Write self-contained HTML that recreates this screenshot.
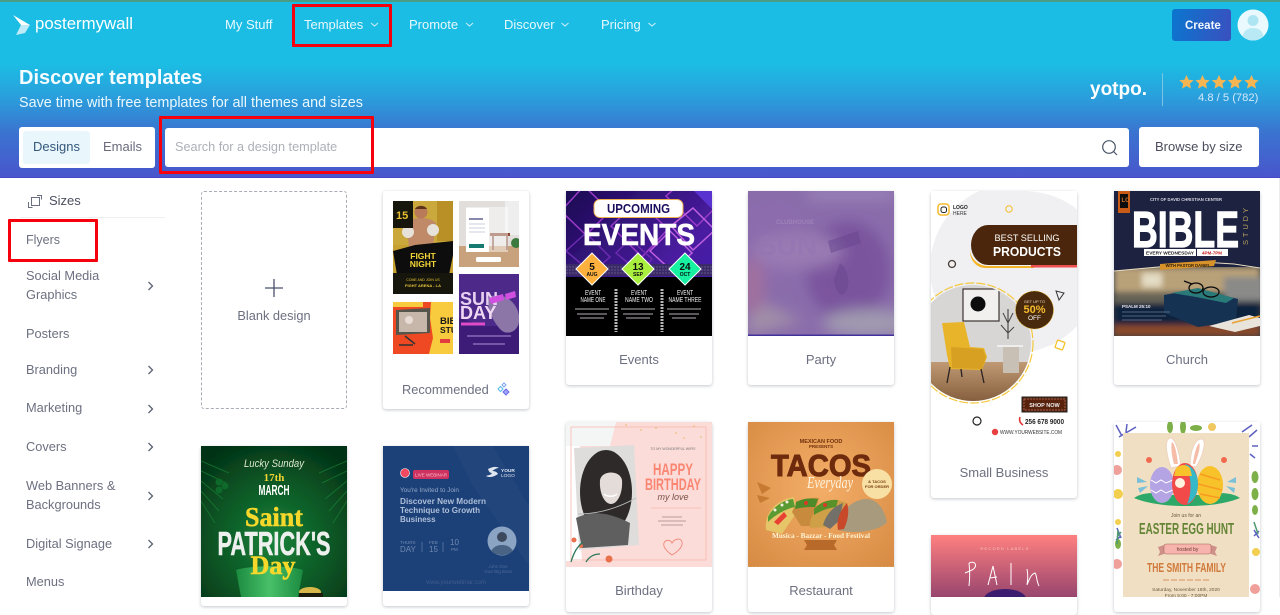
<!DOCTYPE html>
<html lang="en"><head><meta charset="utf-8"><title>Discover templates</title>
<style>
*{box-sizing:border-box;margin:0;padding:0}
html,body{width:1280px;height:597px;overflow:hidden;background:#fff;font-family:"Liberation Sans",sans-serif}
.t{position:absolute;white-space:nowrap;line-height:20px;height:20px;filter:blur(.25px)}
.hd{position:absolute;left:0;top:0;width:1280px;height:178px;background:linear-gradient(180deg,#1bbde4 0,#1bbde4 62px,#2a9fdc 95px,#3a74d0 130px,#4a55cc 177px);border-top:2px solid #4a9c84;border-bottom:1px solid #4548c8}
.nav{color:#e8f8fd;font-size:13px}
.side{color:#6c7080;font-size:12.800px;left:26px}
.lab{color:#6c7080;font-size:13px;text-align:center;width:146px}
.box{position:absolute;background:#fff;border-radius:3px}
.card{position:absolute;width:146px;background:#fff;border-radius:3px;box-shadow:0 1px 3px rgba(40,50,70,.28)}
.red{position:absolute;border:3px solid #f5000c;border-radius:1px}
svg{position:absolute;left:0;top:0}
</style></head><body>

<header class="hd"></header>
<svg width="30" height="40" style="left:8px;top:8px"><path d="M5 7 L22 17 L13 17Z" fill="#fff"/><path d="M22 17 L17 25 L8 27 L13 17Z" fill="#bfeaf7"/></svg>
<div class="t" style="left:35px;top:14px;font-size:16.800px;color:#fff">postermywall</div>

<nav>
<div class="t nav" style="left:225px;top:15px">My Stuff</div>
<div class="t nav" style="left:304px;top:15px">Templates</div>
<div class="t nav" style="left:409px;top:15px">Promote</div>
<div class="t nav" style="left:504px;top:15px">Discover</div>
<div class="t nav" style="left:601px;top:15px">Pricing</div>
</nav>
<svg width="680" height="40"><g fill="none" stroke="#c8ecf7" stroke-width="1.100"><path d="M371 23l3.500 3 3.500-3M466 23l3.500 3 3.500-3M561.500 23l3.500 3 3.500-3M648.500 23l3.500 3 3.500-3"/></g></svg>

<div style="position:absolute;left:1172px;top:9px;width:59px;height:32px;border-radius:3px;background:linear-gradient(100deg,#0a76cf,#3a50bf)"></div>
<div class="t" style="left:1185px;top:16px;font-size:11.500px;font-weight:bold;color:#f2f8ff">Create</div>
<svg width="1280" height="60"><circle cx="1253" cy="25" r="15.500" fill="#e9f9fd"/><circle cx="1253" cy="20.500" r="5.500" fill="#aee5f3"/><path d="M1242.500 36c1-5 5-8 10.500-8s9.500 3 10.500 8c-3 3-6.500 4.500-10.500 4.500s-7.500-1.500-10.500-4.500z" fill="#b8e9f5"/></svg>

<h1 class="t" style="left:19px;top:68px;font-size:20px;font-weight:bold;color:#f4fcff">Discover templates</h1>
<div class="t" style="left:19px;top:93px;font-size:14.400px;color:#eaf8fd">Save time with free templates for all themes and sizes</div>

<div class="t" style="left:1090px;top:80px;font-size:19px;font-weight:bold;color:#fff">yotpo.</div>
<div style="position:absolute;left:1162px;top:73px;width:1px;height:33px;background:#7dc3e6"></div>
<svg width="1280" height="110"><g fill="#f5b553"><path id="s" d="M1186.500 75l2.100 4.700 5.100.5-3.800 3.400 1.100 5-4.500-2.600-4.500 2.600 1.100-5-3.800-3.400 5.100-.5z"/><use href="#s" x="16"/><use href="#s" x="32.500"/><use href="#s" x="48.500"/><use href="#s" x="65"/></g></svg>
<div class="t" style="left:1198px;top:88px;font-size:11.200px;color:#d4e8f8">4.8 / 5 (782)</div>

<div class="box" style="left:19px;top:127px;width:136px;height:41px"></div>
<div style="position:absolute;left:23px;top:131px;width:67px;height:33px;border-radius:3px;background:#e9f6fc"></div>
<div class="t" style="left:33px;top:137px;font-size:13px;color:#33587a">Designs</div>
<div class="t" style="left:103px;top:137px;font-size:13px;color:#6a6a7c">Emails</div>
<div class="box" style="left:165px;top:128px;width:964px;height:39px"></div>
<div class="t" style="left:175px;top:137px;font-size:12.700px;color:#adb0b8">Search for a design template</div>
<svg width="1280" height="170"><circle cx="1109" cy="147" r="6.300" fill="none" stroke="#4a5568" stroke-width="1.200"/><path d="M1113.500 151.500l3.500 3.500" stroke="#4a5568" stroke-width="1.200"/></svg>
<div class="box" style="left:1139px;top:127px;width:120px;height:40px"></div>
<div class="t" style="left:1155px;top:137px;font-size:13px;color:#4c4c5c">Browse by size</div>

<aside>
<svg width="190" height="597"><g fill="none" stroke="#6a7080" stroke-width="1"><rect x="31.500" y="197.500" width="8" height="8"/><path d="M28.500 202v5.500h4M37 195.500h4.500v4"/></g>
<path d="M20 217.500h145" stroke="#eeeeee"/>
<g fill="none" stroke="#5c6272" stroke-width="1.300"><path d="M148.500 282l4 4-4 4M148.500 366l4 4-4 4M148.500 405l4 4-4 4M148.500 443l4 4-4 4M148.500 492l4 4-4 4M148.500 540l4 4-4 4"/></g></svg>
<div class="t" style="left:49px;top:191px;font-size:13px;color:#4c5060">Sizes</div>
<div class="t side" style="top:230px;font-size:12.500px">Flyers</div>
<div class="t side" style="top:266px">Social Media</div>
<div class="t side" style="top:285px">Graphics</div>
<div class="t side" style="top:324px">Posters</div>
<div class="t side" style="top:360px">Branding</div>
<div class="t side" style="top:398px">Marketing</div>
<div class="t side" style="top:437px">Covers</div>
<div class="t side" style="top:476px">Web Banners &amp;</div>
<div class="t side" style="top:495px">Backgrounds</div>
<div class="t side" style="top:534px">Digital Signage</div>
<div class="t side" style="top:572px">Menus</div>
</aside>

<div style="position:absolute;left:201px;top:191px;width:146px;height:218px;border:1px dashed #a8acb4;border-radius:3px"></div>
<svg width="1280" height="597"><path d="M274 279v18M265 288h18" stroke="#47506a" stroke-width="1.300"/></svg>
<div class="t lab" style="left:201px;top:306px;font-size:12.800px">Blank design</div>

<div class="card" style="left:383px;top:191px;height:218px"></div>
<div class="card" style="left:566px;top:191px;height:194px"></div>
<div class="card" style="left:748px;top:191px;height:194px"></div>
<div class="card" style="left:931px;top:191px;height:307px"></div>
<div class="card" style="left:1114px;top:191px;height:194px"></div>
<div class="card" style="left:201px;top:446px;height:160px"></div>
<div class="card" style="left:383px;top:446px;height:160px"></div>
<div class="card" style="left:566px;top:422px;height:190px"></div>
<div class="card" style="left:748px;top:422px;height:190px"></div>
<div class="card" style="left:931px;top:535px;height:80px"></div>
<div class="card" style="left:1114px;top:422px;height:190px"></div>

<svg width="1280" height="597" font-family="Liberation Sans, sans-serif">
<defs>
<filter id="b"><feGaussianBlur stdDeviation=".35"/></filter>
<filter id="b6"><feGaussianBlur stdDeviation="7"/></filter>
<filter id="b3"><feGaussianBlur stdDeviation="3"/></filter>
<linearGradient id="ev" x1="0" y1="0" x2="1" y2="1"><stop offset="0" stop-color="#1b0a52"/><stop offset=".6" stop-color="#4a1ca0"/><stop offset="1" stop-color="#3a20b0"/></linearGradient>
<radialGradient id="tc" cx=".5" cy=".45" r=".75"><stop offset="0" stop-color="#f4ae68"/><stop offset="1" stop-color="#d68a42"/></radialGradient>
<linearGradient id="pn" x1="0" y1="0" x2="0" y2="1"><stop offset="0" stop-color="#ff8080"/><stop offset="1" stop-color="#98456e"/></linearGradient>
<radialGradient id="sp" cx=".5" cy=".62" r=".7"><stop offset="0" stop-color="#1a8238"/><stop offset=".6" stop-color="#0a5424"/><stop offset="1" stop-color="#043216"/></radialGradient>
<linearGradient id="pt" x1="0" y1="0" x2="1" y2="0"><stop offset="0" stop-color="#1c8a40"/><stop offset=".5" stop-color="#48c068"/><stop offset="1" stop-color="#1c8a40"/></linearGradient>
<linearGradient id="flr" x1="0" y1="0" x2="0" y2="1"><stop offset="0" stop-color="#c09a74"/><stop offset="1" stop-color="#86603e"/></linearGradient>
<clipPath id="pc"><circle cx="42" cy="58" r="58"/></clipPath>
</defs>

<g filter="url(#b)">
<!-- recommended mini thumbs -->
<svg x="393" y="201" width="60" height="93"><rect width="60" height="93" fill="#c7a030"/><rect width="60" height="44" fill="#caa83a"/><path d="M44 0h16v40H44z" fill="#b89028"/>
<path d="M13 22c4-4 10-5 15-5s11 1 15 5l-3 24H16z" fill="#c08a68"/><circle cx="28" cy="11" r="6.500" fill="#b87a58"/><path d="M22 8c2-4 10-4 12 0z" fill="#5a3018"/>
<circle cx="15" cy="31" r="6" fill="#e6e2da"/><circle cx="40" cy="29" r="6" fill="#e6e2da"/>
<rect x="0" y="0" width="20" height="27" fill="#171408"/><text x="3" y="18" font-size="11" font-weight="bold" fill="#e8c030">15</text>
<path d="M0 50l22-6 38-4v14l-4 20H4z" fill="#111008"/><rect y="72" width="60" height="21" fill="#14120a"/>
<text x="30" y="58" text-anchor="middle" font-size="8.500" font-weight="bold" fill="#f2d438">FIGHT</text><text x="30" y="66" text-anchor="middle" font-size="8.500" font-weight="bold" fill="#f2d438">NIGHT</text><text x="30" y="80" text-anchor="middle" font-size="3.500" fill="#e8c838">COME AND JOIN US</text><text x="30" y="86" text-anchor="middle" font-size="4" font-weight="bold" fill="#e8c838">FIGHT ARENA - LA</text></svg>
<svg x="459" y="201" width="60" height="66"><rect width="60" height="66" fill="#e2dedc"/><rect x="46" y="0" width="14" height="34" fill="#eeeeee"/><rect y="45" width="60" height="21" fill="#c8a27c"/><rect x="31" y="32" width="20" height="3" fill="#8a4a30"/><path d="M34 35v14M48 35v14" stroke="#7a3a24" stroke-width="1.500"/><circle cx="57" cy="42" r="5" fill="#3c7a40"/><rect x="7" y="6" width="42" height="45" fill="#fff" opacity=".45"/><rect x="7" y="7" width="23" height="44" fill="#fff"/><rect x="10" y="17" width="14" height="2" fill="#88a"/><path d="M10 23h16M10 27h16M10 31h16" stroke="#ccd"/><rect x="10" y="43" width="15" height="4" fill="#167a70"/><rect x="17" y="56" width="25" height="5" rx="1.500" fill="#fff"/></svg>
<svg x="393" y="302" width="60" height="52"><rect width="60" height="52" fill="#ee4a22"/><path d="M38 0h22v52H36l4-16-3-20z" fill="#f7cb3c"/><rect width="30" height="5" fill="#f7cb3c"/><path d="M3 8l34-2 0 25-34 2z" fill="#56554c"/><rect x="6" y="10" width="28" height="20" fill="#c7b7aa"/><circle cx="16" cy="18" r="4" fill="#e8dcd4"/><path d="M12 34l10 8M6 43h14" stroke="#333" stroke-width="1.500"/><text x="47" y="22" font-size="9.500" font-weight="bold" fill="#151515">BIB</text><text x="47" y="31" font-size="8.500" font-weight="bold" fill="#151515">STU</text><rect x="47" y="37" width="10" height="4" fill="#e23a40"/></svg>
<svg x="459" y="274" width="60" height="80"><rect width="60" height="80" fill="#3c1c78"/><path d="M0 0h60v52H25L0 44z" fill="#4d2c8a"/><path d="M30 24c10-8 28 2 30 18s-12 20-18 14-16-22-12-32z" fill="#8c76a8"/><text x="1" y="31" font-size="18" font-weight="bold" fill="#e8d0f0">SUN</text><text x="1" y="45" font-size="18" font-weight="bold" fill="#f0d8f4">DAY</text><path d="M30 24l14-4 1 6-13 4zM46 20l10-3 1 6-10 3z" fill="#d050e0"/><path d="M2 50h24" stroke="#e04cc8" stroke-width="3"/><path d="M8 62h44M14 70h32" stroke="#b090d8"/></svg>
<!-- sparkle -->
<g transform="translate(503 390)" fill="none" stroke-width="1"><path d="M-5-1l2.500-2.500L0-1l-2.500 2.500z" stroke="#53b7e6"/><path d="M-1-5l2-2 2 2-2 2z" stroke="#7aa5f0"/><path d="M0 2l3-3 3 3-3 3z" stroke="#6a6cf0" fill="#a0a4f5"/></g>

<!-- events -->
<svg x="566" y="191" width="146" height="145"><rect width="146" height="145" fill="url(#ev)"/>
<g fill="none" stroke-width="1.500"><path d="M-5 20L18 -5 44 20 20 44zM45 35L72 10l30 28-26 28zM100 5l25-22 30 28-24 24z" stroke="#9a3ac8"/><path d="M105 35l22-18 22 22-22 20zM84 60l20-20 22 22-20 18z" stroke="#c060e0"/><path d="M0 60l20-18 24 24-18 16zM50 62l14-14 22 20-12 14z" stroke="#6c2cb0"/><path d="M128 0h18v18z" stroke="none" fill="#5a30d0"/></g>
<rect y="73" width="146" height="12" fill="#3a2a68"/><path d="M0 76h146M0 79h146M0 82h146" stroke="#8a80a0" stroke-width=".6" stroke-dasharray="2 1"/>
<rect y="86" width="146" height="59" fill="#030204"/>
<rect x="28" y="8.500" width="89" height="18" rx="6" fill="#fff" stroke="#eeb050"/>
<text x="72.500" y="22" text-anchor="middle" font-size="12.500" font-weight="bold" fill="#1c0f5e" textLength="63" lengthAdjust="spacingAndGlyphs">UPCOMING</text>
<text x="73" y="54" text-anchor="middle" font-size="31" font-weight="bold" fill="#fff" stroke="#fff" stroke-width=".6" textLength="112" lengthAdjust="spacingAndGlyphs">EVENTS</text>
<g stroke="#fff" stroke-width="1"><path d="M26 62l16 16-16 16-16-16z" fill="#ffb03c"/><path d="M72 62l16 16-16 16-16-16z" fill="#a8f03c"/><path d="M119 62l16 16-16 16-16-16z" fill="#12f0a0"/></g>
<g text-anchor="middle" font-weight="bold" fill="#111"><text x="26" y="79" font-size="10">5</text><text x="26" y="85" font-size="5">AUG</text><text x="72" y="79" font-size="10">13</text><text x="72" y="85" font-size="5">SEP</text><text x="119" y="79" font-size="10">24</text><text x="119" y="85" font-size="5">OCT</text></g>
<g text-anchor="middle" font-size="7" fill="#eee"><text x="27" y="104" textLength="16" lengthAdjust="spacingAndGlyphs">EVENT</text><text x="27" y="111" textLength="25" lengthAdjust="spacingAndGlyphs">NAME ONE</text><text x="73" y="104" textLength="16" lengthAdjust="spacingAndGlyphs">EVENT</text><text x="73" y="111" textLength="28" lengthAdjust="spacingAndGlyphs">NAME TWO</text><text x="119" y="104" textLength="16" lengthAdjust="spacingAndGlyphs">EVENT</text><text x="119" y="111" textLength="33" lengthAdjust="spacingAndGlyphs">NAME THREE</text></g>
<path d="M9 118h34M11 123h30M14 127h24M55 118h34M57 123h30M60 127h24M101 118h34M103 123h30M106 127h24" stroke="#8d8d8d" stroke-width="1.300"/>
<path d="M50 98v43M96 98v43" stroke="#b8b8b8" stroke-width="3" stroke-dasharray="2 1"/></svg>

<!-- party -->
<svg x="748" y="191" width="146" height="145"><rect width="146" height="145" fill="#8a6cab"/>
<g filter="url(#b6)"><ellipse cx="100" cy="80" rx="42" ry="50" fill="#7a559e"/><ellipse cx="25" cy="50" rx="30" ry="38" fill="#8d6cad"/><rect x="60" y="0" width="86" height="6" fill="#a898c0"/><path d="M0 105l55 25-55 15z" fill="#a08ea8"/><ellipse cx="120" cy="132" rx="45" ry="14" fill="#a09ab0"/><ellipse cx="50" cy="60" rx="45" ry="18" fill="#9a7ab2"/><ellipse cx="5" cy="95" rx="12" ry="28" fill="#a0709f"/></g>
<text x="28" y="33" font-size="6" font-weight="bold" fill="#9d82b8">CLUBHOUSE</text>
<text x="10" y="64" font-size="28" font-weight="bold" fill="#9676b2" opacity=".7">SUN</text>
<path d="M80 50l30-10 3 12-30 10zM92 72c6 4 12 18 6 28s-12-4-12-12z" fill="#6a4790" opacity=".55"/>
<rect y="143.500" width="146" height="1.500" fill="#41309a"/></svg>

<!-- small business -->
<svg x="931" y="191" width="146" height="273"><rect width="146" height="273" fill="#fff"/>
<circle cx="84" cy="77" r="85" fill="#f0eff2"/>
<path d="M146 0H95a90 90 0 0 1 51 18z" fill="#fff"/>
<rect x="7" y="13" width="11" height="11" rx="3" fill="none" stroke="#f5b92c" stroke-width="1.500"/><rect x="10" y="16" width="5.500" height="5.500" rx="2" fill="none" stroke="#222" stroke-width="1"/>
<text x="22" y="18" font-size="5" font-weight="bold" fill="#222">LOGO</text><text x="22" y="24" font-size="5" fill="#333">HERE</text>
<circle cx="78" cy="18" r="3.200" fill="none" stroke="#f5c02c" stroke-width="1"/><circle cx="21" cy="73" r="3.500" fill="none" stroke="#4a3a30" stroke-width="1.300"/>
<path d="M146 34H57a17 20 0 0 0 0 40h89z" fill="#4b2807"/><path d="M39 60c2 10 10 15 18 15h46v2H55c-10 0-16-8-16-17z" fill="#f4b428"/><rect x="100" y="74" width="46" height="2.500" fill="#f05050"/>
<text x="96" y="50" text-anchor="middle" font-size="9" fill="#fff" textLength="65" lengthAdjust="spacingAndGlyphs">BEST SELLING</text>
<text x="96" y="65" text-anchor="middle" font-size="13" font-weight="bold" fill="#fff" textLength="68" lengthAdjust="spacingAndGlyphs">PRODUCTS</text>
<circle cx="42" cy="152" r="60" fill="none" stroke="#f4c83c" stroke-width="1.200" stroke-dasharray="9 2"/>
<svg x="0" y="94" width="102" height="116"><g clip-path="url(#pc)"><rect width="102" height="116" fill="#d8d6d4"/><rect x="0" y="77" width="102" height="39" fill="url(#flr)"/><rect x="32" y="4" width="36" height="32" fill="#f2f0ee" stroke="#3a3230" stroke-width="1.200"/><circle cx="47" cy="19" r="7.500" fill="#111"/>
<path d="M11 38l22-1 6 25 14 1 3 9-5 13-32-1-3-14z" fill="#e8b42c"/><path d="M20 62l32 2 3 8-4 12-30-1z" fill="#d8a020"/><path d="M19 82l-3 16M50 84l3 14M30 84l1 8" stroke="#2a2020" stroke-width="1.300"/>
<path d="M77 24v30" stroke="#333"/><path d="M72 28l5 10 5-10M70 40l7 8 6-6" stroke="#444" fill="none"/><rect x="66" y="60" width="26" height="2" fill="#eee"/><rect x="72" y="62" width="16" height="26" fill="#c8bfb5"/></g></svg>
<circle cx="103.500" cy="119" r="19" fill="#4a2a08" stroke="#e6b830" stroke-width=".6" stroke-dasharray="2 1"/><text x="103.500" y="112" text-anchor="middle" font-size="4" fill="#e8d8c0">GET UP TO</text><text x="103.500" y="122" text-anchor="middle" font-size="11" font-weight="bold" fill="#f5bc30">50%</text><text x="103.500" y="129" text-anchor="middle" font-size="6.500" fill="#fff">OFF</text>
<path d="M125 100l8 2-5 7z" fill="none" stroke="#333" stroke-width="1"/>
<rect x="-4" y="-4" width="8" height="8" rx="1" transform="translate(129 154) rotate(20)" fill="none" stroke="#f5c22c" stroke-width="1.300"/>
<rect x="91" y="206" width="45" height="15" fill="#58200c" stroke="#222"/><rect x="93" y="208" width="41" height="11" fill="none" stroke="#e0a090" stroke-width=".5" stroke-dasharray="2 1"/><text x="113.500" y="216" text-anchor="middle" font-size="5.500" font-weight="bold" fill="#eee">SHOP NOW</text>
<circle cx="46" cy="230" r="4" fill="none" stroke="#222" stroke-width="1.200"/>
<path d="M89 226c-1 3 0 6 3 8" stroke="#e03030" stroke-width="1.500" fill="none"/><text x="94" y="233" font-size="7" font-weight="bold" fill="#222" textLength="39" lengthAdjust="spacingAndGlyphs">256 678 9000</text>
<circle cx="64" cy="241" r="3.200" fill="#e84040"/><text x="69" y="243" font-size="5" fill="#333" textLength="62" lengthAdjust="spacingAndGlyphs">WWW.YOURWEBSITE.COM</text></svg>

<!-- church -->
<svg x="1114" y="191" width="146" height="145"><rect width="146" height="145" fill="#181c36"/><rect width="146" height="80" fill="#1c2140"/><rect x="4" y="0" width="12" height="22" fill="#c85c18"/><rect x="6" y="3" width="8" height="14" fill="#111"/><text x="7.500" y="11" font-size="6" font-weight="bold" fill="#d07020">LO</text>
<text x="72" y="10" text-anchor="middle" font-size="4.500" font-weight="bold" fill="#d8d8e0" textLength="72" lengthAdjust="spacingAndGlyphs">CITY OF DAVID CHRISTIAN CENTER</text>
<text x="18" y="56" font-size="51" font-weight="bold" fill="#fff" stroke="#fff" stroke-width="1.200" textLength="107" lengthAdjust="spacingAndGlyphs">BIBLE</text>
<text transform="translate(134 54) rotate(-90)" font-size="7.500" fill="#b8a060" textLength="37">STUDY</text>
<rect x="30" y="58" width="52" height="7" fill="#fff"/><rect x="83" y="58" width="31" height="7" fill="#fff"/><text x="56" y="63.500" text-anchor="middle" font-size="4.500" font-weight="bold" fill="#222" textLength="48" lengthAdjust="spacingAndGlyphs">EVERY WEDNESDAY</text><text x="98" y="63.500" text-anchor="middle" font-size="4.500" font-weight="bold" fill="#c82020">4PM-7PM</text>
<svg x="0" y="76" width="146" height="69"><rect width="146" height="69" fill="#3a3f44"/><g filter="url(#b3)"><rect width="146" height="26" fill="#b8a078"/><rect x="28" y="6" width="20" height="14" fill="#e4dcc4"/><rect x="110" y="10" width="40" height="24" fill="#8a8a88"/><rect x="0" y="28" width="60" height="10" fill="#6a6858"/><rect x="0" y="36" width="146" height="22" fill="#10223e"/><rect y="58" width="146" height="11" fill="#8a4a2a"/></g></svg>
<path d="M0 80l44-4 44-5 32 2 26 4v-4H0z" fill="#1c2140"/><path d="M0 80l44-4 44-5 32 2 26 4" stroke="#e8dcc0" fill="none"/>
<path d="M46 73l56-4-2 6-54 4z" fill="#d8922c"/><text x="74" y="76" text-anchor="middle" font-size="4.500" font-weight="bold" fill="#30200c" textLength="45" lengthAdjust="spacingAndGlyphs">WITH PASTOR DANIEL</text>
<path d="M50 104l34-6 40 10-2 22-38 6-34-14z" fill="#123052"/><path d="M58 102l26-5 36 10-8 5-30-6z" fill="#2c7a7a"/>
<g fill="none" stroke="#111" stroke-width="1.300"><ellipse cx="82" cy="97" rx="7" ry="5"/><ellipse cx="97" cy="101" rx="8" ry="5"/><path d="M70 90l8 3M88 98h2"/></g>
<text x="8" y="117" font-size="4.500" font-weight="bold" fill="#e8e8f0">PSALM 25:10</text><path d="M8 121h48M8 125h44M8 129h40" stroke="#6a7a94" stroke-width=".8"/>
<path d="M95 135l40-11 11 3v8l-25 6z" fill="#e8e4dc"/><path d="M118 132l28-7" stroke="#e8a030" stroke-width="1.500"/></svg>

<!-- St Patrick -->
<svg x="201" y="446" width="146" height="151"><rect width="146" height="151" fill="url(#sp)"/>
<g stroke="#1a8a38" stroke-width="1" fill="none" opacity=".6"><path d="M0 25l25 12M0 35l22 18M0 45l18 20M0 15l28 12M0 55l14 22M146 25l-25 12M146 35l-22 18M146 45l-18 20M146 15l-28 12M146 55l-14 22"/></g>
<g fill="#0f6a2c"><circle cx="18" cy="36" r="3.500"/><circle cx="24" cy="40" r="3.500"/><circle cx="18" cy="44" r="3.500"/></g>
<text x="73" y="21" text-anchor="middle" font-size="11" font-style="italic" fill="#dfe8d0" textLength="60" lengthAdjust="spacingAndGlyphs">Lucky Sunday</text>
<text x="73" y="35" text-anchor="middle" font-size="11" font-weight="bold" font-family="Liberation Serif, serif" fill="#f5d430">17th</text>
<text x="73" y="49" text-anchor="middle" font-size="15" font-weight="bold" fill="#fff" textLength="31" lengthAdjust="spacingAndGlyphs">MARCH</text>
<text x="73" y="80" text-anchor="middle" font-size="27" font-weight="bold" font-family="Liberation Serif, serif" fill="#f6d82c" stroke="#f6d82c" stroke-width=".5" textLength="58" lengthAdjust="spacingAndGlyphs">Saint</text>
<path d="M35 124c15-5 52-5 67 0l-5 27H40z" fill="url(#pt)"/>
<text x="73" y="109" text-anchor="middle" font-size="33" font-weight="bold" fill="#eef0ee" stroke="#eef0ee" stroke-width=".5" textLength="113" lengthAdjust="spacingAndGlyphs">PATRICK'S</text>
<text x="72" y="128" text-anchor="middle" font-size="26" font-weight="bold" font-family="Liberation Serif, serif" fill="#f6d82c" stroke="#f6d82c" stroke-width=".5" textLength="45" lengthAdjust="spacingAndGlyphs">Day</text>
<ellipse cx="109" cy="146" rx="11" ry="5" fill="#d8b848"/><rect x="98" y="147" width="24" height="6" fill="#1a1a10"/></svg>

<!-- webinar -->
<svg x="383" y="446" width="146" height="145"><rect width="146" height="145" fill="#1d4078"/><path d="M70 0l40 0 36 60v60L90 40z" fill="#23487f" opacity=".6"/>
<circle cx="22" cy="27" r="4.500" fill="#f04a60" stroke="#fff" stroke-width=".6"/><rect x="30" y="24" width="36" height="9" rx="2" fill="#d03060"/><text x="48" y="30.500" text-anchor="middle" font-size="4.500" fill="#f0c0d0">LIVE WEBINAR</text>
<path d="M105 23c4-2 8-3 11-1-3 0-5 2-7 3 3 0 5 1 6 3-4 3-9 4-12 2 3-1 5-1 6-3-2 0-3-1-4-4z" fill="#dfe6f0"/><text x="118" y="26" font-size="4.800" font-weight="bold" fill="#dfe6f0">YOUR</text><text x="118" y="31" font-size="4.800" fill="#dfe6f0">LOGO</text>
<text x="17" y="46" font-size="6.400" fill="#95a8c8">You're Invited to Join</text>
<g font-size="8" font-weight="bold" fill="#aebfd9"><text x="17" y="58" textLength="86" lengthAdjust="spacingAndGlyphs">Discover New Modern</text><text x="17" y="67" textLength="80" lengthAdjust="spacingAndGlyphs">Technique to Growth</text><text x="17" y="76">Business</text></g>
<g fill="#6f8ab0"><text x="17" y="98" font-size="4.500">THURS</text><text x="17" y="106" font-size="8">DAY</text><text x="46" y="98" font-size="4.500">FEB</text><text x="46" y="106" font-size="8">15</text><text x="67" y="99" font-size="8">10</text><text x="68" y="105" font-size="4.500">PM</text></g><path d="M39 96v10M60 96v10" stroke="#6f8ab0" stroke-width=".6"/>
<circle cx="119" cy="95" r="14.500" fill="#8ca4c4"/><circle cx="119" cy="91" r="5" fill="#3d4a5c"/><path d="M108 105c3-5 7-6 11-6s8 1 11 6c-3 3-7 4-11 4s-8-1-11-4z" fill="#4a6484"/>
<text x="115" y="122" text-anchor="middle" font-size="4.500" fill="#4a6a9a">John Doe</text><text x="115" y="127" text-anchor="middle" font-size="4.500" fill="#4a6a9a">Your Big Boss</text>
<text x="73" y="138" text-anchor="middle" font-size="6" fill="#3f5c8c">www.yourwebinar.com</text></svg>

<!-- birthday -->
<svg x="566" y="422" width="146" height="145"><rect width="146" height="145" fill="#fbdcd8"/><path d="M0 0h50l-6 24H0z" fill="#f4f6f6"/><path d="M0 24h14l-2 55 4 60H0z" fill="#fff"/>
<rect x="5" y="5" width="135" height="133" fill="none" stroke="#f8b8ae" stroke-width=".8"/>
<path d="M8 26l60-3 5 100-60 5z" fill="#dfdcdc"/><ellipse cx="40" cy="70" rx="26" ry="42" fill="#2e2c2c"/><path d="M34 58c2-10 20-10 22 0 1 14-5 24-11 24s-12-10-11-24z" fill="#e4dcd8"/><path d="M10 96c20-10 40-2 54 5l-2 22-46 3z" fill="#5e5e5e"/><path d="M38 72c3 3 10 3 13 0" stroke="#fff" stroke-width="1.500" fill="none"/><path d="M12 92c20 0 40-6 58-16" stroke="#bbb" fill="none"/>
<g fill="#e8704c"><circle cx="8" cy="118" r="2.500"/><circle cx="43" cy="137" r="3.500"/><circle cx="15" cy="124" r="2"/></g><path d="M5 140c3-10 6-15 12-20M20 140c3-5 8-8 14-8" stroke="#2f7a5c" stroke-width="1.300" fill="none"/>
<text x="107" y="28" text-anchor="middle" font-size="3.500" fill="#777">TO MY WONDERFUL WIFE!</text>
<text x="107" y="53" text-anchor="middle" font-size="17" font-weight="bold" fill="#fa8672" textLength="40" lengthAdjust="spacingAndGlyphs">HAPPY</text><text x="107" y="68" text-anchor="middle" font-size="17" font-weight="bold" fill="#fa8672" textLength="56" lengthAdjust="spacingAndGlyphs">BIRTHDAY</text><text x="107" y="78" text-anchor="middle" font-size="9" font-style="italic" fill="#7a5048">my love</text>
<path d="M85 86h50" stroke="#f4a8a0" stroke-width=".6"/><g stroke="#a88" stroke-width=".8"><path d="M96 95h20M92 99h28M95 103h22"/></g>
<path d="M106 133c-7-5-9-9-8-12s6-4 8 0c3-5 9-5 10-1s-3 9-10 13z" fill="none" stroke="#ef8878" stroke-width=".9"/>
<g fill="#e8b860"><circle cx="60" cy="3" r=".8"/><circle cx="75" cy="8" r=".8"/><circle cx="90" cy="6" r=".8"/><circle cx="110" cy="11" r=".8"/><circle cx="128" cy="4" r=".8"/><circle cx="135" cy="15" r=".8"/><circle cx="118" cy="16" r=".8"/></g></svg>

<!-- tacos -->
<svg x="748" y="422" width="146" height="145"><rect width="146" height="145" fill="url(#tc)"/>
<text x="73" y="21" text-anchor="middle" font-size="5.500" font-weight="bold" fill="#71300e">MEXICAN FOOD</text><text x="73" y="26" text-anchor="middle" font-size="4.500" font-weight="bold" fill="#71300e">PRESENTS</text>
<text x="73" y="54" text-anchor="middle" font-size="31" font-weight="bold" fill="#6e2c0c" stroke="#6e2c0c" stroke-width="1" textLength="100" lengthAdjust="spacingAndGlyphs">TACOS</text>
<text x="82" y="66" text-anchor="middle" font-size="17" font-style="italic" fill="#fff3dc" font-family="Liberation Serif, serif" textLength="46" lengthAdjust="spacingAndGlyphs">Everyday</text>
<circle cx="129" cy="62" r="15" fill="#f8e0a4"/><text x="129" y="61" text-anchor="middle" font-size="4" font-weight="bold" fill="#7a4012">& TACOS</text><text x="129" y="66" text-anchor="middle" font-size="4" font-weight="bold" fill="#7a4012">FOR ORDER</text>
<path d="M9 60l14 6-9 6zM9 73l13 3-10 5z" fill="#c67a30"/>
<path d="M18 108c-2-15 8-30 28-33l3 15-15 22z" fill="#e6c468"/><path d="M20 95c5-10 15-17 25-18l2 8c-10 2-20 8-27 15z" fill="#5a9a30"/><path d="M26 100l10-10 3 4-9 9z" fill="#e84030"/><g fill="#f4f0e0"><circle cx="27" cy="88" r="1.500"/><circle cx="34" cy="83" r="1.500"/><circle cx="39" cy="80" r="1.500"/></g>
<path d="M44 90c4-10 14-15 27-14l-9 28h-9z" fill="#c88a3c"/><path d="M48 80c8-4 14-4 22-3l-3 8c-6 0-12 0-20 2z" fill="#4e8a2c"/><circle cx="58" cy="81" r="2" fill="#d83a28"/>
<path d="M62 106c-1-15 10-26 28-28l9 3-15 24z" fill="#d0a048"/><path d="M75 103c3-10 9-18 20-22l-4 18-9 8z" fill="#73706a"/><path d="M66 87c6-7 15-10 24-9l-2 7c-8 1-16 4-22 8z" fill="#58902c"/><circle cx="77" cy="83" r="2" fill="#d83a28"/>
<path d="M90 108c-1-12 8-26 22-30s23 5 27 22c-6 8-30 13-49 8z" fill="#a89a7c"/><path d="M90 108c-2-11 2-19 9-27 3 10 0 19-3 26z" fill="#c84a2c"/>
<text x="73" y="116" text-anchor="middle" font-size="7.500" font-weight="bold" font-family="Liberation Serif, serif" fill="#fff4d4" textLength="98" lengthAdjust="spacingAndGlyphs">Musica - Bazzar - Food Festival</text>
<path d="M56 118h33l-3 5 3 5H56l3-5z" fill="#b76a2c"/>
<path d="M0 144.500h146" stroke="#d99a58" stroke-dasharray="2 1.500"/></svg>

<!-- pain -->
<svg x="931" y="535" width="146" height="62"><rect width="146" height="62" fill="url(#pn)"/><text x="74" y="15" text-anchor="middle" font-size="4" fill="#f8c4c0" letter-spacing="1.200">RECORD LABELS</text>
<g fill="none" stroke="#fff" stroke-width="1"><path d="M38 51c1-9 1-15 0-23M38 28c7-3 9 4 3 7l-7 3"/><path d="M57 50l5-19 4 19M59 43l7-1"/><path d="M80 28l0 22"/><path d="M96 34c1 5 1 10 0 16 2-5 4-11 8-12 2 2 1 7 4 13"/></g>
<ellipse cx="74" cy="64" rx="21" ry="10" fill="#3a1c6e"/></svg>

<!-- easter -->
<svg x="1114" y="422" width="146" height="175"><rect width="146" height="175" fill="#fff"/>
<g fill="none" stroke-width="1.500"><path d="M5 15L22 5M12 10l1-8M8 14L2 3" stroke="#5b60c0"/><path d="M128 10l10-7M135 15l8-7M138 24l6 0M136 32l5 4" stroke="#5b60c0"/><path d="M3 106l4 10M2 118l5-4M140 108l5 8M140 114l5-5" stroke="#5b60c0"/></g>
<g fill="#7eb048"><ellipse cx="56" cy="5" rx="3" ry="6"/><ellipse cx="69" cy="5" rx="3" ry="7"/><ellipse cx="82" cy="6" rx="6" ry="3"/><ellipse cx="141" cy="55" rx="3.500" ry="6"/><ellipse cx="141" cy="72" rx="3.500" ry="6"/><ellipse cx="4" cy="122" rx="3" ry="5"/><ellipse cx="141" cy="88" rx="3" ry="5"/></g><circle cx="98" cy="5" r="4" fill="#f0c860"/>
<g fill="#f0a09a"><circle cx="3" cy="48" r="5"/><circle cx="3" cy="142" r="5"/><circle cx="141" cy="167" r="5"/></g><g fill="#f3cf50"><circle cx="4" cy="72" r="5"/><circle cx="4" cy="100" r="3"/><circle cx="142" cy="130" r="4"/><circle cx="4" cy="32" r="3"/></g><path d="M4 108l-1 14M3 115l4-5M140 100l4 12" stroke="#4e9a70" stroke-width="1.500"/>
<rect x="9" y="11" width="126" height="164" fill="#f0dfc2"/>
<g fill="#7ac0d8"><path d="M23 55l10 5-10 1zM24 66l10-2-8 7z"/><path d="M122 55l-9 5 9 1zM121 66l-9-2 8 7z"/></g>
<path d="M20 76c10-7 25-5 30-3h44c5-2 22-4 32 3-10 4-25 8-53 8s-43-4-53-8z" fill="#2fa868"/>
<path d="M57 46c-5-15-7-28-1-30 5-1 9 13 11 28z" fill="#fff" stroke="#f0d4c0"/><path d="M76 44c0-15 5-28 12-27 5 2 1 17-6 28z" fill="#fff" stroke="#f0d4c0"/><path d="M60 42c-3-10-3-20-2-22 3 2 5 12 6 22zM79 42c1-10 4-19 6-21 2 3-1 13-4 21z" fill="#f5bca8"/>
<ellipse cx="48" cy="63" rx="12" ry="18" fill="#b4a4e4"/><path d="M37 58l5 3 5-3 5 3 7-3M37 68l5 3 5-3 5 3 7-3" stroke="#fff" fill="none"/>
<ellipse cx="96" cy="63" rx="13" ry="19" fill="#f7c22c"/><path d="M86 52l20 6M84 62l24 6M86 72l20 4" stroke="#f89a20" stroke-width="1.500"/>
<ellipse cx="71" cy="62" rx="13" ry="21" fill="#f24848"/><path d="M71 42c8 2 13 10 13 20s-5 18-11 20c5-10 5-28-2-40z" fill="#36b8c8"/><path d="M62 46c5-4 10-4 14 0l2 8H60z" fill="#f7c22c"/><circle cx="66" cy="61" r="5" fill="#fff3e0"/>
<g fill="#f06a50"><circle cx="35" cy="38" r="3"/><circle cx="110" cy="38" r="3"/></g>
<text x="72" y="95" text-anchor="middle" font-size="5" fill="#6a5a3c">Join us for an</text>
<text x="72.500" y="112" text-anchor="middle" font-size="15.500" fill="#648434" font-weight="bold" textLength="95" lengthAdjust="spacingAndGlyphs">EASTER EGG HUNT</text>
<path d="M44 125l6-2 0 9-6 2 2-4zM103 125l-6-2 0 9 6 2-2-4z" fill="#d0908a"/><rect x="50" y="122" width="47" height="10" rx="2" fill="#f7b4ae" stroke="#a06050" stroke-width=".5"/><text x="73.500" y="129" text-anchor="middle" font-size="5" fill="#6a3a30">hosted by</text>
<text x="72.500" y="150" text-anchor="middle" font-size="12.500" font-weight="bold" fill="#d17a3c" textLength="79" lengthAdjust="spacingAndGlyphs">THE SMITH FAMILY</text>
<path d="M49 158h46" stroke="#d07a3c" stroke-width=".7" stroke-dasharray="6 2"/>
<text x="72" y="169" text-anchor="middle" font-size="4.800" fill="#6a5a3c">Saturday, November 18th, 2020</text><text x="72" y="175" text-anchor="middle" font-size="4.800" fill="#6a5a3c">From 5:00 - 7:00PM</text></svg>
</g>
</svg>

<div class="t" style="left:402px;top:380px;font-size:12.800px;color:#6c7080">Recommended</div>
<div class="t lab" style="left:566px;top:350px">Events</div>
<div class="t lab" style="left:748px;top:350px">Party</div>
<div class="t lab" style="left:931px;top:463px">Small Business</div>
<div class="t lab" style="left:1114px;top:350px">Church</div>
<div class="t lab" style="left:566px;top:581px">Birthday</div>
<div class="t lab" style="left:748px;top:581px">Restaurant</div>

<div class="red" style="left:292px;top:4px;width:100px;height:43px"></div>
<div class="red" style="left:159px;top:116px;width:215px;height:58px"></div>
<div class="red" style="left:8px;top:219px;width:90px;height:43px"></div>
<div style="position:absolute;left:1279px;top:178px;width:1px;height:419px;background:#ececec"></div>
</body></html>
